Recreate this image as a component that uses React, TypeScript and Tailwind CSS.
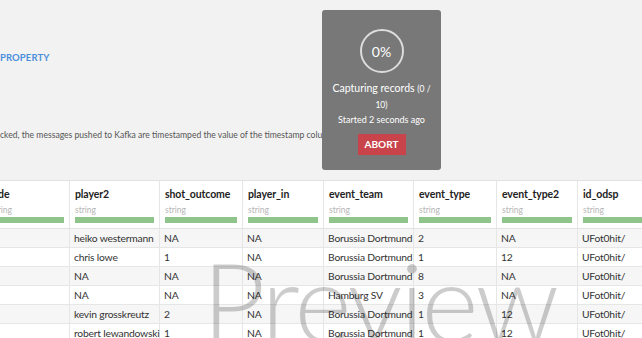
import React from 'react';

interface Column {
  name: string;
  width: string;
}

const columns: Column[] = [
  { name: 'side', width: 'w-[84px]' },
  { name: 'player2', width: 'w-[90px]' },
  { name: 'shot_outcome', width: 'w-[83px]' },
  { name: 'player_in', width: 'w-[81px]' },
  { name: 'event_team', width: 'w-[90px]' },
  { name: 'event_type', width: 'w-[83px]' },
  { name: 'event_type2', width: 'w-[81px]' },
  { name: 'id_odsp', width: 'w-[90px]' },
];

const rows: string[][] = [
  ['', 'heiko westermann', 'NA', 'NA', 'Borussia Dortmund', '2', 'NA', 'UFot0hit/'],
  ['', 'chris lowe', '1', 'NA', 'Borussia Dortmund', '1', '12', 'UFot0hit/'],
  ['', 'NA', 'NA', 'NA', 'Borussia Dortmund', '8', 'NA', 'UFot0hit/'],
  ['', 'NA', 'NA', 'NA', 'Hamburg SV', '3', 'NA', 'UFot0hit/'],
  ['', 'kevin grosskreutz', '2', 'NA', 'Borussia Dortmund', '1', '12', 'UFot0hit/'],
  ['', 'robert lewandowski', '1', 'NA', 'Borussia Dortmund', '1', '12', 'UFot0hit/'],
];

export default function App() {
  return (
    <div className="relative w-[642px] h-[338px] overflow-hidden bg-[#f2f2f2] font-['Lato',sans-serif]">
      {/* Settings area */}
      <div className="h-[180px] pt-[52px]">
        <div className="text-[9.5px] font-bold leading-[12px] tracking-[0.1px] text-[#4a8fdc]">PROPERTY</div>
        <p className="mt-[65px] text-[8.6px] leading-[13px] text-[#555] whitespace-nowrap">
          cked, the messages pushed to Kafka are timestamped the value of the timestamp column
        </p>
      </div>

      {/* Table */}
      <div className="-ml-[14px] flex flex-col border-t border-[#e2e2e2] bg-white">
        <div className="flex h-[48px] border-b border-[#e2e2e2] bg-white">
          {columns.map((col) => (
            <div key={col.name} className={`${col.width} shrink-0 border-r border-[#e6e6e6] px-[5px] pt-[6px]`}>
              <div className="text-[10.5px] font-bold leading-[14px] tracking-[-0.1px] text-[#222]">{col.name}</div>
              <div className="mt-[3px] text-[8.5px] leading-[12px] text-[#b5b5b5]">string</div>
              <div className="mt-[1px] h-[6px] bg-[#8fc58a]"></div>
            </div>
          ))}
        </div>
        {rows.map((row, i) => (
          <div
            key={i}
            className={`flex h-[19px] border-b border-[#e6e6e6] ${i % 2 === 0 ? 'bg-[#f6f6f6]' : 'bg-white'}`}
          >
            {row.map((cell, j) => (
              <div
                key={j}
                className={`${columns[j].width} shrink-0 border-r border-[#e6e6e6] px-[4px] text-[10.3px] leading-[18px] tracking-[-0.2px] text-[#333] whitespace-nowrap`}
              >
                {cell}
              </div>
            ))}
          </div>
        ))}
      </div>

      {/* Preview watermark */}
      <div className="pointer-events-none absolute left-[202px] top-[245px] text-[110px] font-light leading-none tracking-[-3px] text-black/20">
        Preview
      </div>

      {/* Capture progress overlay */}
      <div className="absolute left-[322px] top-[10px] flex h-[160px] w-[119px] flex-col items-center rounded-[3px] bg-[#787878] px-[6px] pt-[19px] text-white">
        <div className="flex h-[44px] w-[44px] items-center justify-center rounded-full border-2 border-[#dcdcdc] text-[14px]">
          0%
        </div>
        <div className="mt-[8px] text-center text-[10.5px] leading-[15px] whitespace-nowrap">
          Capturing records <span className="text-[8.5px]">(0 /</span>
          <br />
          <span className="text-[8.5px]">10)</span>
        </div>
        <div className="text-[9px] leading-[14px] whitespace-nowrap">Started 2 seconds ago</div>
        <button className="mt-[7px] h-[21px] w-[48px] bg-[#c8434a] text-[10px] font-bold leading-[21px] text-white">
          ABORT
        </button>
      </div>
    </div>
  );
}
